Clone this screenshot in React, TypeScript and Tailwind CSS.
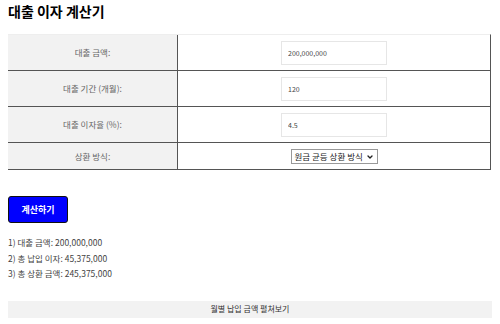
import { ChevronDown } from 'lucide-react'

const font = { fontFamily: '"Noto Sans CJK KR", "Noto Sans", sans-serif' }

const rows = [
  { label: '대출 금액:', value: '200,000,000' },
  { label: '대출 기간 (개월):', value: '120' },
  { label: '대출 이자율 (%):', value: '4.5' },
]

const results = [
  '1) 대출 금액: 200,000,000',
  '2) 총 납입 이자: 45,375,000',
  '3) 총 상환 금액: 245,375,000',
]

export default function App() {
  return (
    <div className="w-[500px] h-[324px] bg-white text-[#333]" style={font}>
      <h1 className="px-2 pt-[1px] text-[14px] font-bold leading-[20px] text-black">대출 이자 계산기</h1>

      {/* Form table */}
      <div className="mx-2 mt-[13px] w-[483px] border-t border-[#eee] border-r border-r-[#555]">
        {rows.map((row) => (
          <div key={row.label} className="flex h-[36px] border-b border-[#555]">
            <div className="w-[170px] flex items-center justify-center bg-[#f2f2f2] border-r border-[#555] text-[8.5px] text-[#666]">
              {row.label}
            </div>
            <div className="flex-1 flex items-center justify-center">
              <input
                readOnly
                value={row.value}
                className="w-[106px] h-[24px] border border-[#e6e6e6] px-[6px] text-[7px] text-[#444] outline-none"
                style={font}
              />
            </div>
          </div>
        ))}
        <div className="flex h-[27px] border-b border-[#555]">
          <div className="w-[170px] flex items-center justify-center bg-[#f2f2f2] border-r border-[#555] text-[8.5px] text-[#666]">
            상환 방식:
          </div>
          <div className="flex-1 flex items-center justify-center">
            <div className="relative w-[87px] h-[15px] border border-[#999] flex items-center pl-[3px] text-[8.5px] text-[#222]">
              원금 균등 상환 방식
              <ChevronDown className="absolute right-[3px] top-[3px] h-[8px] w-[8px]" strokeWidth={4} />
            </div>
          </div>
        </div>
      </div>

      <button
        type="button"
        className="ml-2 mt-[26px] w-[60px] h-[27px] rounded-[3px] bg-[#0000ff] border border-[#111] text-white text-[9px] font-bold"
        style={font}
      >
        계산하기
      </button>

      <div className="px-2 mt-[13px] flex flex-col gap-[3px] text-[8.5px] leading-[12.5px] text-[#444]">
        {results.map((line) => (
          <p key={line}>{line}</p>
        ))}
      </div>

      <div className="mx-2 mt-[21px] h-[17px] bg-[#f2f2f2] flex items-center justify-center text-[8px] text-[#333]">
        월별 납입 금액 펼쳐보기
      </div>
    </div>
  )
}
